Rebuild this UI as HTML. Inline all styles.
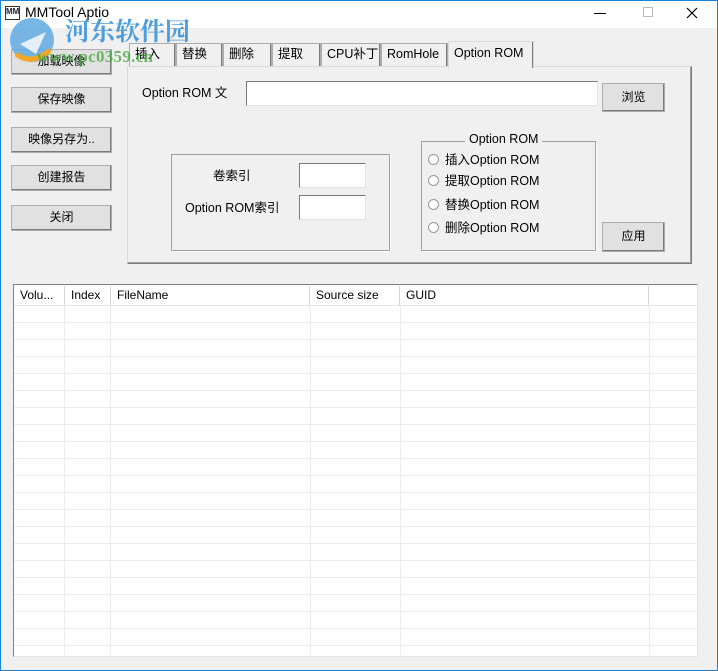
<!DOCTYPE html>
<html><head><meta charset="utf-8"><style>
*{box-sizing:border-box;margin:0;padding:0}
body{width:718px;height:671px;position:relative;overflow:hidden;background:#f0f0f0;font-family:"Liberation Sans","Noto Sans CJK SC",sans-serif;font-size:12px;color:#000}
.a{position:absolute}
.win{left:0;top:0;width:718px;height:671px;border:1px solid #1883d7}
.title{left:1px;top:1px;width:716px;height:27px;background:#fff}
.btn{position:absolute;background:#e1e1e1;border:1px solid #adadad;box-shadow:inset -1px -1px 0 #7a7a7a;text-align:center;font-size:12px}
.tab{position:absolute;top:43px;height:23px;border:1px solid #adadad;border-bottom:none;background:#f0f0f0;font-size:12.5px;padding-left:5px;line-height:20px;box-shadow:inset -1px 0 0 #7a7a7a}
.edit{position:absolute;background:#fff;border:1px solid #7a7a7a;border-right-color:#e3e3e3;border-bottom-color:#e3e3e3}
.grp{position:absolute;border:1px solid #a0a0a0;box-shadow:1px 1px 0 #fff}
.rad{position:absolute;left:428px;width:11px;height:11px;border-radius:50%;border:1px solid #999;background:#fff}
.rl{position:absolute;left:445px;font-size:12.5px}
.hd{position:absolute;top:286px;height:19px;border-right:1px solid #d5d5d5;font-size:12px;padding-left:6px;line-height:19px;background:#fff}
.vl{position:absolute;top:305px;height:350px;width:1px;background:#ececec}
</style></head><body>
<div class="a win"></div>
<div class="a title"></div>
<div class="a" style="left:5px;top:6px;width:15px;height:14px;border:1px solid #333;font-size:8px;line-height:10px;font-weight:bold;color:#223">MM</div>
<div class="a" style="left:25px;top:4px;font-size:14px">MMTool Aptio</div>
<div class="a" style="left:594px;top:13px;width:12px;height:1px;background:#000"></div>
<div class="a" style="left:643px;top:7px;width:10px;height:10px;border:1px solid #bbb"></div>
<svg class="a" style="left:686px;top:7px" width="12" height="12"><path d="M1 1L11 11M11 1L1 11" stroke="#000" stroke-width="1.2"/></svg>

<!-- left buttons -->
<div class="btn" style="left:11px;top:49px;width:101px;height:26px;line-height:22px">加载映像</div>
<div class="btn" style="left:11px;top:87px;width:101px;height:26px;line-height:22px">保存映像</div>
<div class="btn" style="left:11px;top:127px;width:101px;height:26px;line-height:22px">映像另存为..</div>
<div class="btn" style="left:11px;top:165px;width:101px;height:26px;line-height:22px">创建报告</div>
<div class="btn" style="left:11px;top:205px;width:101px;height:26px;line-height:22px">关闭</div>

<!-- tabs -->
<div class="tab" style="left:129px;width:47px">插入</div>
<div class="tab" style="left:176px;width:47px">替换</div>
<div class="tab" style="left:223px;width:49px">删除</div>
<div class="tab" style="left:272px;width:49px">提取</div>
<div class="tab" style="left:321px;width:60px">CPU补丁</div>
<div class="tab" style="left:381px;width:67px">RomHole</div>
<div class="a" style="left:127px;top:66px;width:565px;height:198px;border:1px solid #d9d9d9;border-right-color:#7a7a7a;border-bottom-color:#7a7a7a;box-shadow:inset -1px -1px 0 #a0a0a0;background:#f0f0f0"></div>
<div class="tab" style="left:448px;top:41px;height:27px;width:86px;border-color:#d9d9d9;line-height:22px">Option ROM</div>

<div class="a" style="left:142px;top:82px;font-size:12.5px">Option ROM 文</div>
<div class="edit" style="left:246px;top:81px;width:352px;height:25px"></div>
<div class="btn" style="left:602px;top:83px;width:63px;height:29px;line-height:26px">浏览</div>

<div class="grp" style="left:171px;top:154px;width:219px;height:97px"></div>
<div class="a" style="left:213px;top:165px;font-size:12.5px">卷索引</div>
<div class="a" style="left:185px;top:197px;font-size:12.5px">Option ROM索引</div>
<div class="edit" style="left:299px;top:163px;width:67px;height:25px"></div>
<div class="edit" style="left:299px;top:195px;width:67px;height:25px"></div>

<div class="grp" style="left:421px;top:141px;width:175px;height:110px"></div>
<div class="a" style="left:465px;top:132px;padding:0 4px;background:#f0f0f0;font-size:12.5px">Option ROM</div>
<div class="rad" style="top:154px"></div><div class="rl" style="top:149px">插入Option ROM</div>
<div class="rad" style="top:175px"></div><div class="rl" style="top:170px">提取Option ROM</div>
<div class="rad" style="top:199px"></div><div class="rl" style="top:194px">替换Option ROM</div>
<div class="rad" style="top:222px"></div><div class="rl" style="top:217px">删除Option ROM</div>
<div class="btn" style="left:602px;top:222px;width:63px;height:30px;line-height:27px">应用</div>

<!-- list -->
<div class="a" style="left:13px;top:284px;width:685px;height:373px;border:1px solid #828282;border-right-color:#e3e3e3;border-bottom-color:#e3e3e3;background:#fff"></div>
<div class="a" style="left:14px;top:285px;width:683px;height:21px;background:#fff;border-bottom:1px solid #e5e5e5"></div>
<div class="hd" style="left:14px;width:51px">Volu...</div>
<div class="hd" style="left:65px;width:46px">Index</div>
<div class="hd" style="left:111px;width:199px">FileName</div>
<div class="hd" style="left:310px;width:90px">Source size</div>
<div class="hd" style="left:400px;width:249px">GUID</div>
<div class="vl" style="left:64px"></div>
<div class="vl" style="left:110px"></div>
<div class="vl" style="left:310px"></div>
<div class="vl" style="left:400px"></div>
<div class="vl" style="left:649px"></div>
<div class="a" style="left:14px;top:306px;width:683px;height:349px;background:repeating-linear-gradient(to bottom,transparent 0,transparent 16px,#ececec 16px,#ececec 17px)"></div>

<!-- watermark on top -->
<svg class="a" style="left:6px;top:14px" width="56" height="50"><circle cx="26" cy="26" r="22" fill="#5fa9e0" opacity=".85"/><path d="M14 30 L40 18 L30 40 Z" fill="#fff" opacity=".8"/><path d="M10 40 Q26 52 44 36" stroke="#f5a623" stroke-width="5" fill="none"/></svg>
<div class="a" style="left:65px;top:12px;font-size:25px;font-weight:bold;color:#3d93d9;font-family:'Noto Serif CJK SC','Noto Sans CJK SC',serif;opacity:.9">河东软件园</div>
<div class="a" style="left:37px;top:47px;font-size:17px;font-weight:bold;color:#4aaa44;font-family:'Liberation Serif',serif;opacity:.8;letter-spacing:.3px">www.pc0359.cn</div>
</body></html>
